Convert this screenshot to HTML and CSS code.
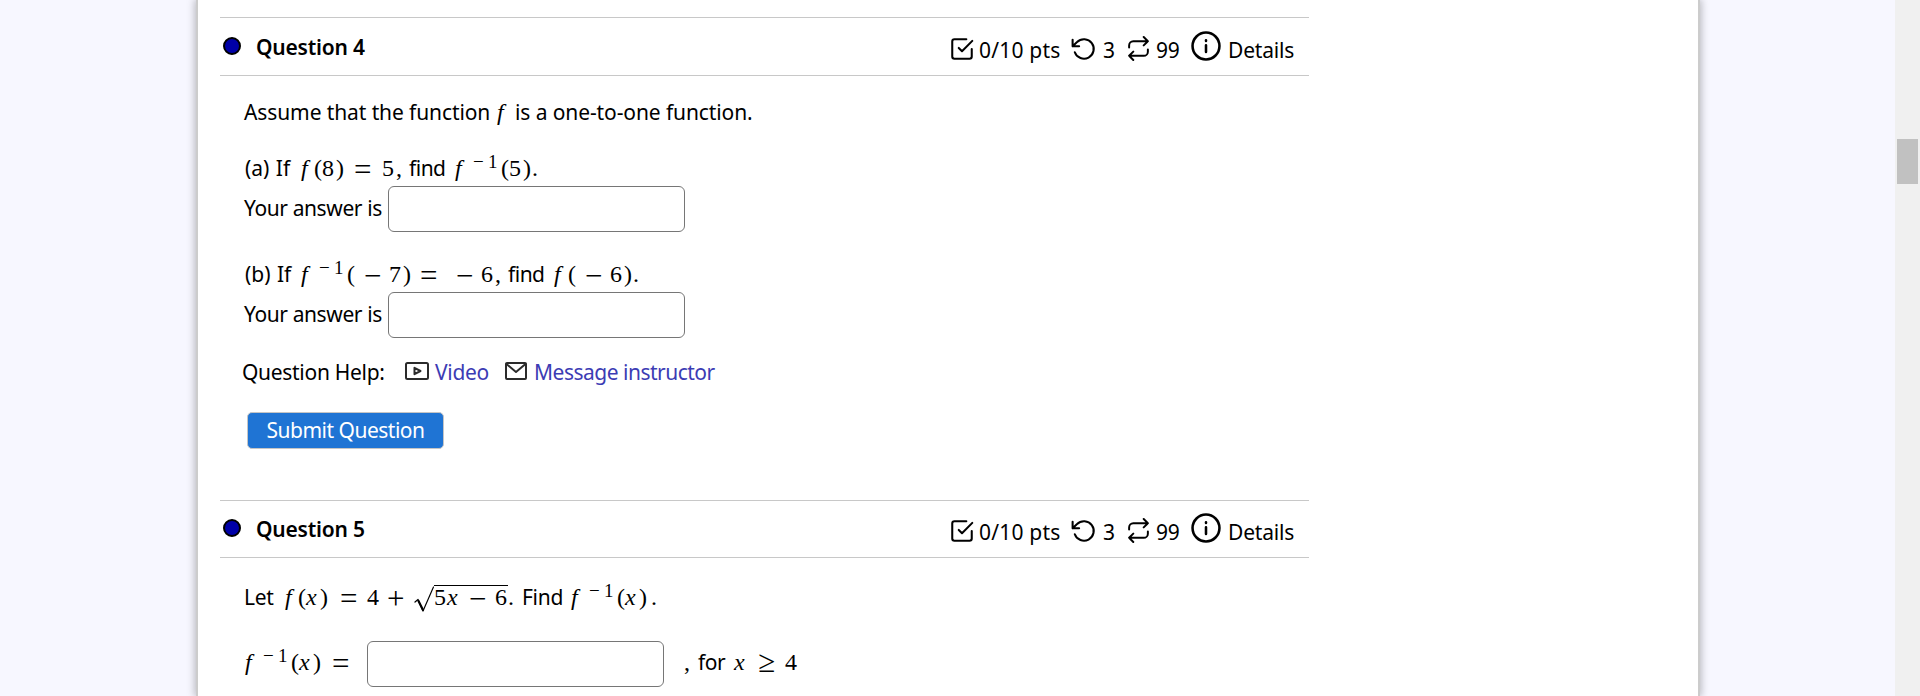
FILE: index.html
```html
<!DOCTYPE html>
<html lang="en">
<head>
<meta charset="utf-8">
<title>Assessment</title>
<link rel="stylesheet" href="styles.css">
</head>
<body>
<svg class="defs" aria-hidden="true">
  <symbol id="check" viewBox="0 0 24 24"><path d="M9 11l3 3 9.500-9.500M21 12v7a2 2 0 0 1-2 2H5a2 2 0 0 1-2-2V5a2 2 0 0 1 2-2h11"/></symbol>
  <symbol id="undo" viewBox="0 0 24 24"><path d="M1.500 3.500v6h6M3.500 15a9 9 0 1 0 2.100-9.400L1.500 9.500"/></symbol>
  <symbol id="repeat" viewBox="0 0 24 24"><path d="M17 1l4 4-4 4M3 11V9a4 4 0 0 1 4-4h14M7 23l-4-4 4-4M21 13v2a4 4 0 0 1-4 4H3"/></symbol>
  <symbol id="info" viewBox="0 0 24 24"><circle cx="12" cy="12" r="9.500"/><path d="M12 16.300v-4.800M12 8.400v-.5"/></symbol>
</svg>
<div class="layout">
  <main class="page">
    <section class="question">
      <header class="head">
        <span class="dot"></span><h2>Question 4</h2>
        <div class="stats">
          <svg class="ic c1"><use href="#check"/></svg><span class="s1">0/10 pts</span>
          <svg class="ic c2"><use href="#undo"/></svg><span class="s2">3</span>
          <svg class="ic c3"><use href="#repeat"/></svg><span class="s3">99</span>
          <svg class="ic big"><use href="#info"/></svg><span class="s4">Details</span>
        </div>
      </header>
      <div class="body">
        <p class="line intro"><span class="w253">Assume that the function</span><i class="w18">f</i><span class="one">is a one-to-one function.</span></p>
        <p class="line part-a"><span class="w56 lead">(a) If</span><i class="w13">f</i><b class="w8">(</b><b class="w14">8</b><b class="w18">)</b><b class="w28 op">=</b><b class="w14">5</b><b class="w13">,</b><span class="w46 tight">find</span><i class="w18">f</i><sup class="w15">−</sup><sup class="w13">1</sup><b class="w8">(</b><b class="w14">5</b><b class="w9">)</b><b>.</b></p>
        <div class="answer"><label>Your answer is</label><input type="text"></div>
        <p class="line part-b"><span class="w56 lead">(b) If</span><i class="w18">f</i><sup class="w15">−</sup><sup class="w13">1</sup><b class="w17">(</b><b class="w25 op">−</b><b class="w14">7</b><b class="w17">)</b><b class="w36 op">=</b><b class="w25 op">−</b><b class="w14">6</b><b class="w13">,</b><span class="w46 tight">find</span><i class="w14">f</i><b class="w17">(</b><b class="w25 op">−</b><b class="w14">6</b><b class="w9">)</b><b>.</b></p>
        <div class="answer"><label>Your answer is</label><input type="text"></div>
        <div class="help">
          <span class="help-label">Question Help:</span>
          <svg class="video" viewBox="0 0 24 18"><rect x="1" y="1" width="22" height="16" rx="1.500"/><path d="M9.500 5.800v6.400L15.500 9z"/></svg><a class="v">Video</a>
          <svg class="mail" viewBox="0 0 22 18"><rect x="1" y="1" width="20" height="16" rx="1"/><path d="M1.500 2l9.500 8 9.500-8"/></svg><a class="msg">Message instructor</a>
        </div>
        <button class="submit">Submit Question</button>
      </div>
    </section>
    <section class="question second">
      <header class="head">
        <span class="dot"></span><h2>Question 5</h2>
        <div class="stats">
          <svg class="ic c1"><use href="#check"/></svg><span class="s1">0/10 pts</span>
          <svg class="ic c2"><use href="#undo"/></svg><span class="s2">3</span>
          <svg class="ic c3"><use href="#repeat"/></svg><span class="s3">99</span>
          <svg class="ic big"><use href="#info"/></svg><span class="s4">Details</span>
        </div>
      </header>
      <div class="body">
        <p class="line five"><span class="w41">Let</span><i class="w13">f</i><b class="w8">(</b><i class="w14">x</i><b class="w20">)</b><b class="w27 op">=</b><b class="w20">4</b><b class="w27 op">+</b><svg class="root" viewBox="0 0 20 26"><path d="M1 16l3-2.500 5 11.500L19.500 1"/><path class="thick" d="M4.500 15l4.500 9"/></svg><span class="radicand"><b class="w13">5</b><i class="w22">x</i><b class="w26 op">−</b><b class="w13">6</b></span><b class="w14">.</b><span class="w49">Find</span><i class="w18">f</i><sup class="w15">−</sup><sup class="w13">1</sup><b class="w8">(</b><i class="w14">x</i><b class="w12">)</b><b>.</b></p>
        <div class="answer final">
          <p class="line"><i class="w18">f</i><sup class="w15">−</sup><sup class="w13">1</sup><b class="w8">(</b><i class="w14">x</i><b class="w19">)</b><b class="w33 op">=</b></p><input type="text">
          <p class="line after"><b class="w14">,</b><span class="w36 tight">for</span><i class="w24">x</i><b class="w27 op geq">≥</b><b>4</b></p>
        </div>
      </div>
    </section>
  </main>
  <aside class="scroll"><div class="thumb"></div></aside>
</div>
</body>
</html>
```
FILE: styles.css
```css
* { box-sizing: border-box; }
body { margin: 0; height: 696px; overflow: hidden; background: #f7f7ff; color: #000; font: 21px/36px "Noto Sans", "Open Sans", sans-serif; letter-spacing: -.3px; }
.defs { display: none; }
svg { flex: none; fill: none; stroke: #000; stroke-width: 2; stroke-linecap: round; stroke-linejoin: round; }
.layout { display: flex; justify-content: space-between; height: 696px; padding-left: 196px; }
.page { width: 1504px; height: 696px; padding: 17px 0 0 22px; overflow: hidden; background: #fff; border: solid #ccc; border-width: 0 2px; box-shadow: 0 0 8px 1px rgba(0,0,0,.28); }
.scroll { width: 25px; padding: 139px 2px 0; background: #f0f0f0; }
.thumb { height: 45px; background: #c1c1c1; }
.head { display: flex; width: 1089px; height: 59px; padding-left: 3px; border: solid #c8c8c8; border-width: 1px 0; }
.dot { width: 18px; height: 18px; margin: 19px 15px 0 0; background: #0000a8; border: 2px solid #000; border-radius: 50%; }
h2 { flex: 1; margin: 11px 0 0; font-size: 21px; line-height: 36px; font-weight: 600; letter-spacing: -.2px; }
.second .head { height: 58px; }
.second .dot { margin-top: 18px; }
.second h2 { margin-top: 10px; }
.stats { display: flex; width: 360px; padding-top: 14px; white-space: nowrap; }
.second .stats { padding-top: 13px; }
.ic { width: 26px; height: 26px; margin: 4px 0 0 0; stroke-width: 1.9; }
.c3 { width: 25px; height: 25px; }
.s1 { width: 96px; padding-left: 4px; letter-spacing: .2px; }
.s2 { width: 29px; padding-left: 6px; }
.s3 { width: 38px; padding-left: 5px; }
.big { width: 34px; height: 34px; margin-top: -3px; stroke-width: 1.8; }
.s4 { padding-left: 5px; letter-spacing: -.2px; }
.body { padding-left: 24px; }
.line { margin: 0; height: 36px; white-space: nowrap; }
.line > *, .radicand > * { display: inline-block; line-height: 1; }
.line i, .line b, .line sup { font-family: "Liberation Serif", serif; font-weight: 400; font-size: 24px; line-height: 0; letter-spacing: 0; }
.line i { font-style: italic; }
.line sup { font-size: 19px; vertical-align: 8px; }
.line .op { font-size: 31px; vertical-align: -4px; }
.line .geq { vertical-align: -2px; }
.intro { margin-top: 18px; letter-spacing: -.1px; }
.part-a { margin-top: 20px; padding-left: 1px; }
.part-b { margin-top: 24px; padding-left: 1px; }
.tight { letter-spacing: -.5px; }
.lead { letter-spacing: 0; word-spacing: 1px; }
.answer { display: flex; height: 46px; }
.answer label { width: 144px; line-height: 45px; white-space: nowrap; letter-spacing: -.4px; }
input { width: 297px; height: 46px; margin: 0; background: #fff; border: 1px solid #767676; border-radius: 6px; }
.help { display: flex; height: 36px; margin: 15px 0 23px -2px; line-height: 39px; white-space: nowrap; letter-spacing: -.3px; }
.help-label { width: 163px; }
.help svg { stroke: #2b2b2b; margin-top: 9px; }
.video { width: 24px; height: 18px; }
.mail { width: 22px; height: 18px; }
.v { width: 76px; padding-left: 6px; }
.msg { padding-left: 7px; letter-spacing: -.5px; }
a { color: #3c3cb4; }
.submit { display: block; width: 197px; height: 37px; margin: 0 0 51px 3px; padding: 0 0 1px; color: #fff; background: #1f74d4; border: 1px solid #c5c5c5; border-radius: 5px; font: 21px/34px "Noto Sans", sans-serif; letter-spacing: -.5px; white-space: nowrap; }
.five { margin-top: 21px; }
.line > .root { width: 20px; height: 26px; vertical-align: -7px; stroke-width: 1.2; }
.root .thick { stroke-width: 2.2; }
.line > .radicand { border-top: 1.5px solid #000; line-height: 22px; }
.final { margin-top: 26px; }
.final .line { height: 42px; line-height: 43px; }
.final .line:first-child { width: 123px; padding-left: 1px; }
.final .after { padding-left: 20px; }
.w8 { width: 8px; } .w9 { width: 9px; } .w12 { width: 12px; } .w13 { width: 13px; }
.w14 { width: 14px; } .w15 { width: 15px; } .w17 { width: 17px; } .w18 { width: 18px; }
.w19 { width: 19px; } .w20 { width: 20px; } .w22 { width: 22px; } .w24 { width: 24px; }
.w25 { width: 25px; } .w26 { width: 26px; } .w27 { width: 27px; } .w28 { width: 28px; }
.w33 { width: 33px; } .w36 { width: 36px; } .w41 { width: 41px; } .w46 { width: 46px; }
.w49 { width: 49px; } .w56 { width: 56px; } .w253 { width: 253px; }
```
